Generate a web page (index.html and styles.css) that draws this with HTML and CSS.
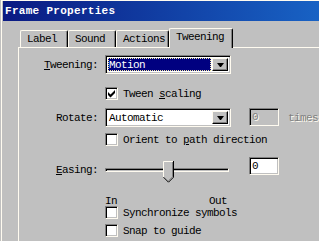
FILE: index.html
```html
<!DOCTYPE html>
<html lang="en">
<head>
  <meta charset="UTF-8">
  <meta name="viewport" content="width=device-width, initial-scale=1.0">
  <title>Frame Properties</title>
  <link rel="stylesheet" href="styles.css">
</head>
<body>
  <div class="window">
    <div class="titlebar">Frame Properties</div>

    <div class="tabs">
      <div class="tab tab-label">Label</div>
      <div class="tab tab-sound">Sound</div>
      <div class="tab tab-actions">Actions</div>
      <div class="tab tab-active">Tweening</div>
    </div>

    <div class="panel">
      <!-- Tweening -->
      <div class="row">
        <span class="lbl"><u>T</u>weening:</span>
        <div class="select">
          <div class="select-value focused">Motion</div>
          <div class="drop-btn">
            <svg width="7" height="4" viewBox="0 0 7 4"><polygon points="0,0 7,0 4,4 3,4" fill="#000"/></svg>
          </div>
        </div>
      </div>

      <div class="check-row check-tween">
        <span class="checkbox">
          <svg width="11" height="11" viewBox="0 0 11 11"><polygon points="2,4 4.5,6.5 9,2 9,5 4.5,9.5 2,7" fill="#000"/></svg>
        </span>
        <span>Tween <u>s</u>caling</span>
      </div>

      <!-- Rotate -->
      <div class="row row-rotate">
        <span class="lbl">Rotate:</span>
        <div class="select">
          <div class="select-value">Automatic</div>
          <div class="drop-btn">
            <svg width="7" height="4" viewBox="0 0 7 4"><polygon points="0,0 7,0 4,4 3,4" fill="#000"/></svg>
          </div>
        </div>
        <div class="textbox disabled">0</div>
        <span class="times">times</span>
      </div>

      <div class="check-row check-orient">
        <span class="checkbox"></span>
        <span>Orient to <u>p</u>ath direction</span>
      </div>

      <!-- Easing -->
      <div class="row row-easing">
        <span class="lbl"><u>E</u>asing:</span>
        <div class="slider">
          <div class="track"></div>
          <svg class="thumb" width="11" height="22" viewBox="0 0 11 22">
            <polygon points="0,0 11,0 11,16 5.5,21.5 0,16" fill="#c0c0c0"/>
            <path d="M0.5 16 V0.5 H10" stroke="#fffbf0" fill="none"/>
            <path d="M10.5 0 V16.2 L5.5 21.2 L0.5 16.2" stroke="#000" fill="none"/>
            <path d="M9.5 1 V15.8 L5.5 19.8" stroke="#808080" fill="none"/>
          </svg>
        </div>
        <div class="textbox easing-box">0</div>
      </div>

      <div class="check-row row-inout">
        <span class="in">In</span>
        <span>Out</span>
      </div>

      <div class="check-row check-sync">
        <span class="checkbox"></span>
        <span>Synchronize symbols</span>
      </div>

      <div class="check-row check-snap">
        <span class="checkbox"></span>
        <span>Snap to guide</span>
      </div>
    </div>
  </div>
</body>
</html>
```

FILE: styles.css
```css
body {
  margin: 0;
  height: 241px;
  overflow: hidden;
  background-color: #c0c0c0;
  font-family: "Liberation Mono", monospace;
  font-size: 11px;
  letter-spacing: -0.6px;
  color: #000;
}
.window {
  margin-left: 1px;
  height: 240px;
  overflow: hidden;
  border-top: 1px solid #fffbf0;
  border-left: 1px solid #fffbf0;
}
.titlebar {
  margin-left: 1px;
  height: 20px;
  padding-left: 2px;
  line-height: 20px;
  background: linear-gradient(to right, #0a1a82, #1862c4);
  color: #fff;
  font-weight: bold;
  letter-spacing: 0.3px;
}

/* tabs */
.tabs {
  display: flex;
  align-items: flex-end;
  height: 26px;
  padding-left: 18px;
}
.tab {
  box-sizing: border-box;
  height: 17px;
  padding-left: 6px;
  line-height: 16px;
  background-color: #c0c0c0;
  border-top: 1px solid #fffbf0;
  border-left: 1px solid #fffbf0;
  border-right: 1px solid #000;
  border-radius: 2px 2px 0 0;
  box-shadow: inset -1px 0 #808080;
}
.tab-label { width: 48px; }
.tab-sound { width: 48px; }
.tab-actions { width: 53px; }
.tab-active {
  position: relative;
  z-index: 1;
  width: 64px;
  height: 20px;
  margin-bottom: -1px;
}

/* panel */
.panel {
  margin-left: 16px;
  height: 186px;
  padding-top: 7px;
  border-top: 1px solid #fffbf0;
  border-left: 1px solid #fffbf0;
}
.row {
  display: flex;
  align-items: center;
  height: 19px;
}
.lbl {
  width: 79px;
  margin-right: 7px;
  text-align: right;
}
.check-row {
  display: flex;
  align-items: center;
  height: 13px;
  padding-left: 86px;
}
.check-tween { margin-top: 13px; }
.row-rotate { margin-top: 8px; }
.check-orient { margin-top: 6px; }
.row-easing { margin-top: 11px; height: 25px; }
.row-inout { margin-top: 14px; height: 10px; }
.check-sync { margin-top: 0; }
.check-snap { margin-top: 5px; }

.select,
.checkbox,
.textbox,
.track {
  box-sizing: border-box;
  border: 1px solid;
  border-color: #808080 #fffbf0 #fffbf0 #808080;
  box-shadow: inset 1px 1px #000, inset -1px -1px #c0c0c0;
}

/* dropdowns */
.select {
  display: flex;
  width: 126px;
  height: 19px;
  padding: 1px;
  background-color: #fff;
}
.select-value {
  flex: 1;
  padding-left: 2px;
  line-height: 15px;
  margin: 1px 0;
}
.select-value.focused {
  margin: 1px;
  padding-left: 0;
  line-height: 13px;
  background-color: #000080;
  color: #fff;
  border: 1px dotted #f4ec9c;
}
.drop-btn {
  box-sizing: border-box;
  display: flex;
  align-items: center;
  justify-content: center;
  width: 16px;
  margin: 1px 1px 1px 0;
  background-color: #c0c0c0;
  border-top: 1px solid #fffbf0;
  border-left: 1px solid #fffbf0;
  border-right: 1px solid #000;
  border-bottom: 1px solid #000;
  box-shadow: inset -1px -1px #808080;
}

/* checkboxes */
.checkbox {
  display: flex;
  align-items: center;
  justify-content: center;
  width: 13px;
  height: 13px;
  margin-right: 5px;
  background-color: #fff;
}
.checkbox svg {
  display: block;
}

/* text boxes */
.textbox {
  align-self: flex-start;
  width: 30px;
  height: 18px;
  margin-left: 18px;
  padding-left: 2px;
  line-height: 16px;
  background-color: #fff;
}
.textbox.disabled {
  background-color: #c0c0c0;
  color: #808080;
  text-shadow: 1px 1px #fffbf0;
}
.easing-box {
  margin-left: 20px;
}
.times {
  margin-left: 9px;
  color: #808080;
  text-shadow: 1px 1px #fffbf0;
  white-space: nowrap;
}

/* slider */
.slider {
  position: relative;
  display: flex;
  align-items: center;
  width: 124px;
  height: 25px;
}
.track {
  width: 100%;
  height: 4px;
  box-shadow: inset 1px 1px #000;
}
.thumb {
  position: absolute;
  left: 58px;
  top: 4px;
}
.in {
  width: 104px;
}
```
